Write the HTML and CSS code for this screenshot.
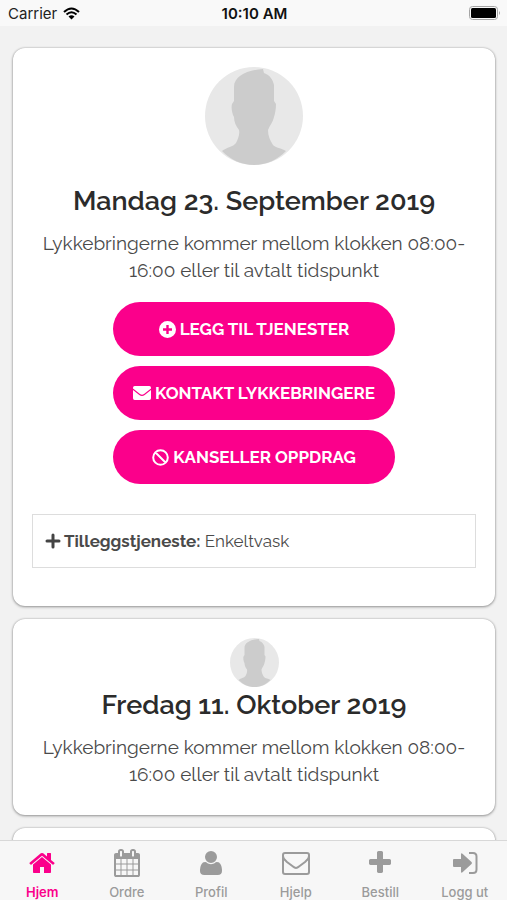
FILE: index.html
```html
<!DOCTYPE html>
<html lang="no">
<head>
    <meta charset="UTF-8">
    <meta name="viewport" content="width=device-width, initial-scale=1.0">
    <title>Hjem</title>

    <link rel="stylesheet" href="styles.css">
</head>
<body>
    <svg class="defs" aria-hidden="true">
        <symbol id="avatar" viewBox="0 0 98 98">
            <circle cx="49" cy="49" r="49" fill="#e8e8e8"/>
            <path fill="#cccccc" d="M17 84C22 80 28 80 31 76C33 72 35 67 34 63C31 59 29 55 29 50C27 47 26 40 27 37L29 34V20C29 9 42 3 58 2L59 6C65 8 68 13 69 18V34L71 37C71 42 70 47 69 50C68 55 65 58 63 63C63 69 65 73 68 78C71 81 76 81 81 84C72 93 61 98 49 98S26 93 17 84Z"/>
        </symbol>
    </svg>

    <header class="status-bar">
        <span class="carrier">
            Carrier
            <svg width="17" height="13" viewBox="0 0 17 13">
                <path d="M1 5Q8.500-2 16 5M3.500 7.500Q8.500 3 13.500 7.500" fill="none" stroke="#000" stroke-width="2"/>
                <path d="M5.500 9.500Q8.500 7 11.500 9.500L8.500 12.500Z" fill="#000"/>
            </svg>
        </span>
        <span class="time">10:10 AM</span>
        <span class="battery">
            <svg width="32" height="15" viewBox="0 0 32 15">
                <rect x="0.500" y="0.500" width="28" height="13" rx="3" fill="none" stroke="#a5a5a5"/>
                <rect x="2" y="2" width="25" height="10" rx="1.500" fill="#000"/>
                <path d="M30 5Q32 7 30 9Z" fill="#a5a5a5"/>
            </svg>
        </span>
    </header>

    <main class="content">
        <section class="card">
            <svg class="avatar"><use href="#avatar"/></svg>
            <h2>Mandag 23. September 2019</h2>
            <p>Lykkebringerne kommer mellom klokken 08:00-<wbr>16:00 eller til avtalt tidspunkt</p>

            <div class="buttons">
                <button type="button" class="btn">
                    <svg width="17" height="17" viewBox="0 0 17 17">
                        <path fill="#fff" fill-rule="evenodd" d="M8.500 0a8.500 8.500 0 1 0 0 17a8.500 8.500 0 1 0 0-17ZM7.300 4h2.400v3.300H13v2.400H9.700V13H7.300V9.700H4V7.300h3.300Z"/>
                    </svg>
                    LEGG TIL TJENESTER
                </button>
                <button type="button" class="btn">
                    <svg width="18" height="14" viewBox="0 0 18 14">
                        <path fill="#fff" d="M0 1.700Q0 0 1.700 0H16.300Q18 0 18 1.700V2.500L11 8Q9 9.500 7 8L0 2.500ZM0 4L6.300 9Q9 11 11.700 9L18 4V12.300Q18 14 16.300 14H1.700Q0 14 0 12.300Z"/>
                    </svg>
                    KONTAKT LYKKEBRINGERE
                </button>
                <button type="button" class="btn">
                    <svg width="17" height="17" viewBox="0 0 17 17">
                        <path fill="none" stroke="#fff" stroke-width="2" d="M8.500 1.200a7.300 7.300 0 1 0 0 14.600a7.300 7.300 0 1 0 0-14.600ZM3.500 3.500l10 10"/>
                    </svg>
                    KANSELLER OPPDRAG
                </button>
            </div>

            <div class="extra">
                <svg width="16" height="16" viewBox="0 0 16 16">
                    <path stroke="#444" stroke-width="3" stroke-linecap="round" d="M8 2v12M2 8h12"/>
                </svg>
                <span><b>Tilleggstjeneste:</b> Enkeltvask</span>
            </div>
        </section>

        <section class="card">
            <svg class="avatar small"><use href="#avatar"/></svg>
            <h2>Fredag 11. Oktober 2019</h2>
            <p>Lykkebringerne kommer mellom klokken 08:00-<wbr>16:00 eller til avtalt tidspunkt</p>
        </section>

        <section class="card next"></section>
    </main>

    <nav class="tab-bar">
        <a href="#hjem" class="active">
            <svg viewBox="0 0 1792 1792"><path d="M1472 992v480q0 26-19 45t-45 19h-384v-384h-256v384h-384q-26 0-45-19t-19-45v-480q0-1 .5-3t.5-3l575-474 575 474q1 2 1 6zm223-69l-62 74q-8 9-21 11h-3q-13 0-21-7l-692-577-692 577q-12 8-24 7-13-2-21-11l-62-74q-8-10-7-23.500t11-21.500l719-599q32-26 76-26t76 26l244 204v-195q0-14 9-23t23-9h192q14 0 23 9t9 23v408l219 182q10 8 11 21.500t-7 23.500z"/></svg>
            Hjem
        </a>
        <a href="#ordre">
            <svg viewBox="0 0 1792 1792"><path d="M192 1664h288v-288h-288v288zm352 0h320v-288h-320v288zm-352-352h288v-320h-288v320zm352 0h320v-320h-320v320zm-352-384h288v-288h-288v288zm736 736h320v-288h-320v288zm-384-736h320v-288h-320v288zm768 736h288v-288h-288v288zm-384-352h320v-320h-320v320zm-352-864v-288q0-13-9.500-22.500t-22.500-9.500h-64q-13 0-22.500 9.500t-9.500 22.500v288q0 13 9.500 22.500t22.500 9.500h64q13 0 22.500-9.500t9.500-22.500zm736 864h288v-320h-288v320zm-384-384h320v-288h-320v288zm384 0h288v-288h-288v288zm32-480v-288q0-13-9.500-22.500t-22.500-9.500h-64q-13 0-22.500 9.500t-9.500 22.500v288q0 13 9.500 22.500t22.500 9.500h64q13 0 22.500-9.500t9.500-22.500zm384-64v1280q0 52-38 90t-90 38h-1408q-52 0-90-38t-38-90v-1280q0-52 38-90t90-38h128v-96q0-66 47-113t113-47h64q66 0 113 47t47 113v96h384v-96q0-66 47-113t113-47h64q66 0 113 47t47 113v96h128q52 0 90 38t38 90z"/></svg>
            Ordre
        </a>
        <a href="#profil">
            <svg viewBox="0 0 1792 1792"><path d="M1600 1405q0 120-73 189.500t-194 69.500h-874q-121 0-194-69.500t-73-189.500q0-53 3.500-103.500t14-109 26.500-108.500 43-97.500 62-81 85.500-53.500 111.500-20q9 0 42 21.500t74.500 48 108 48 133.500 21.500 133.500-21.500 108-48 74.500-48 42-21.500q61 0 111.500 20t85.500 53.500 62 81 43 97.500 26.500 108.500 14 109 3.500 103.500zm-320-893q0 159-112.500 271.500t-271.500 112.500-271.500-112.500-112.500-271.500 112.500-271.500 271.500-112.500 271.500 112.500 112.500 271.500z"/></svg>
            Profil
        </a>
        <a href="#hjelp">
            <svg viewBox="0 0 28 28"><path class="line" d="M3 4H25Q27 4 27 6V23Q27 25 25 25H3Q1 25 1 23V6Q1 4 3 4ZM1 7C1 10 3 11 5 13L11 17.500Q14 20.500 17 17.500L23 13C25 11 27 10 27 7"/></svg>
            Hjelp
        </a>
        <a href="#bestill">
            <svg viewBox="0 0 1792 1792"><path d="M1600 736v192q0 40-28 68t-68 28h-416v416q0 40-28 68t-68 28h-192q-40 0-68-28t-28-68v-416h-416q-40 0-68-28t-28-68v-192q0-40 28-68t68-28h416v-416q0-40 28-68t68-28h192q40 0 68 28t28 68v416h416q40 0 68 28t28 68z"/></svg>
            Bestill
        </a>
        <a href="#loggut">
            <svg viewBox="0 0 28 28"><path d="M3 10H10V5.500Q10 3.500 11.500 4.700L20.500 13Q21.500 14 20.500 15L11.500 23.300Q10 24.500 10 22.500V18H3Q2 18 2 17V11Q2 10 3 10Z"/><path class="line" d="M18 4H22Q25.500 4 25.500 7.500V20.500Q25.500 24 22 24H18"/></svg>
            Logg ut
        </a>
    </nav>
</body>
</html>
```
FILE: styles.css
```css
* {
    box-sizing: border-box;
}

body {
    margin: 0;
    height: 100vh;
    display: flex;
    flex-direction: column;
    font-family: Raleway, Lato, sans-serif;
    background-color: #f2f2f2;
    color: #4a4a4a;
}

.defs {
    position: absolute;
    width: 0;
    height: 0;
}

.status-bar {
    display: grid;
    grid-template-columns: 1fr auto 1fr;
    align-items: center;
    height: 26px;
    flex-shrink: 0;
    padding: 1px 6px 0 8px;
    background-color: #f9f9f9;
    color: #222;
    font-family: Inter, sans-serif;
    font-size: 15px;
}

.carrier {
    display: flex;
    align-items: center;
    gap: 6px;
}

.time {
    font-weight: 600;
    color: #111;
}

.battery {
    display: flex;
    justify-content: flex-end;
}

.content {
    flex: 1;
    min-height: 0;
    overflow: hidden;
    padding: 22px 12px 0 13px;
}

.card {
    display: flex;
    flex-direction: column;
    align-items: center;
    padding: 19px 19px 27px;
    margin-bottom: 13px;
    background-color: #fff;
    border-radius: 12px;
    box-shadow: 0 0 2px rgba(0, 0, 0, 0.25), 0 1px 3px rgba(0, 0, 0, 0.35);
    text-align: center;
}

.card.next {
    height: 200px;
}

.avatar {
    width: 98px;
    height: 98px;
    margin-bottom: 18px;
}

.avatar.small {
    width: 49px;
    height: 49px;
    margin-bottom: 0;
}

h2 {
    margin: 0 0 11px;
    font-size: 27px;
    line-height: 36px;
    font-weight: 600;
    color: #2b2b2b;
}

p {
    margin: 0;
    font-size: 19px;
    line-height: 27px;
}

.buttons {
    display: flex;
    flex-direction: column;
    gap: 10px;
    margin: 18px 0 30px;
}

.btn {
    display: flex;
    align-items: center;
    justify-content: center;
    gap: 4px;
    width: 282px;
    height: 54px;
    padding: 0;
    border: none;
    border-radius: 27px;
    background-color: #fb008b;
    color: #fff;
    font-family: inherit;
    font-size: 17px;
    font-weight: 700;
    cursor: pointer;
}

.extra {
    display: flex;
    align-items: center;
    gap: 3px;
    width: 100%;
    height: 54px;
    margin-bottom: 11px;
    padding: 0 12px;
    border: 1px solid #ddd;
    font-size: 17px;
}

.tab-bar {
    display: flex;
    flex-shrink: 0;
    height: 60px;
    border-top: 1px solid #d8d8d8;
    background-color: #f7f7f7;
}

.tab-bar a {
    flex: 1;
    display: flex;
    flex-direction: column;
    align-items: center;
    gap: 7px;
    padding-top: 8px;
    color: #9b9b9b;
    fill: #9b9b9b;
    stroke: #9b9b9b;
    stroke-width: 0;
    font-family: Inter, sans-serif;
    font-size: 13px;
    line-height: 16px;
    font-weight: 500;
    text-decoration: none;
}

.tab-bar a.active {
    color: #fb008b;
    fill: #fb008b;
    font-weight: 600;
}

.tab-bar svg {
    width: 28px;
    height: 28px;
}

.tab-bar .line {
    fill: none;
    stroke-width: 2;
}
```
